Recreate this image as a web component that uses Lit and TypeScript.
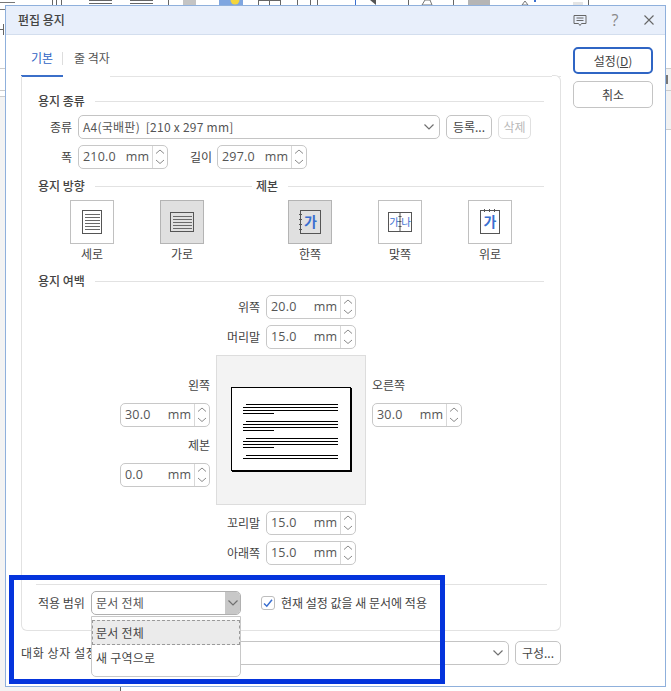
import { LitElement, html, css, svg } from "lit";
import { customElement } from "lit/decorators.js";

const chevUp = svg`<path d="M2 5.5 L6 2 L10 5.5" fill="none" stroke="#8a8a8a" stroke-width="1"/>`;
const chevDown = svg`<path d="M2 2 L6 5.5 L10 2" fill="none" stroke="#8a8a8a" stroke-width="1"/>`;

const spin = (val: string) => html`
  <div class="spin">
    <span class="val">${val}</span><span class="unit">mm</span>
    <span class="arrows">
      <svg width="12" height="8" viewBox="0 0 12 8">${chevUp}</svg>
      <svg width="12" height="8" viewBox="0 0 12 8">${chevDown}</svg>
    </span>
  </div>`;

const chevron = html`<svg class="chev" width="12" height="8" viewBox="0 0 12 8"><path d="M1.5 1.5 L6 6 L10.5 1.5" fill="none" stroke="#707070" stroke-width="1.2"/></svg>`;

const lines = (w: number, ys: number[]) =>
  ys.map((y) => svg`<path d="M4 ${y}.5 H${w - 3}" stroke="#6a6a6a" stroke-width="1"/>`);

const portraitIcon = svg`<svg width="22" height="26" viewBox="0 0 22 26">
  <rect x="1.5" y="1.5" width="19" height="23" fill="none" stroke="#555"/>
  ${lines(22, [5, 8, 11, 14, 17, 20])}</svg>`;
const landscapeIcon = svg`<svg width="26" height="22" viewBox="0 0 26 22">
  <rect x="1.5" y="1.5" width="23" height="19" fill="none" stroke="#555"/>
  ${lines(26, [5, 8, 11, 14, 17])}</svg>`;

@customElement("app-root")
export class AppRoot extends LitElement {
  static styles = css`
    :host {
      display: block;
      position: relative;
      width: 671px;
      height: 691px;
      overflow: hidden;
      background: #fff;
      font-family: "Noto Sans CJK KR", "Noto Sans", sans-serif;
      font-size: 12px;
      color: #444;
      line-height: 16px;
    }
    * { box-sizing: border-box; }
    .backdrop { position: absolute; inset: 0; }
    .dialog {
      position: absolute;
      left: 5px;
      top: 5px;
      width: 661px;
      height: 682px;
      background: #fff;
      border: 1px solid #8fb0dc;
      display: flex;
      flex-direction: column;
    }
    .titlebar {
      height: 29px;
      flex: none;
      background: #e8effb;
      border-bottom: 1px solid #d3deee;
      display: flex;
      align-items: center;
      padding-left: 12px;
      padding-right: 10px;
      font-weight: 500;
      color: #444;
    }
    .titlebar .t { flex: 1; }
    .ticons { display: flex; gap: 20px; align-items: center; }
    .help { width: 16px; text-align: center; font-family: "Open Sans", sans-serif; font-size: 16px; color: #888; }
    .body { position: relative; flex: 1; padding: 12px 0 0 15px; display: flex; gap: 12px; }
    .main { width: 540px; display: flex; flex-direction: column; }
    .tabs { display: flex; height: 30px; }
    .tab { width: 42px; height: 30px; text-align: center; padding-top: 3px; color: #2f65c4; border-bottom: 2px solid #3b6fc9; position: relative; }
    .tab.off { width: auto; margin-left: 11px; color: #555; border: 0; }
    .tab.on::after { content: ""; position: absolute; right: 0; top: 5px; width: 1px; height: 13px; background: #ddd; }
    .tabs .rest { flex: 1; height: 30px; border-bottom: 1px solid #e4e4e4; }
    .panel {
      height: 555px;
      margin-top: -1px;
      border: 1px solid #e2e2e2;
      border-top: 0;
      border-radius: 0 6px 6px 6px;
      padding: 17px 16px 0 14px;
      position: relative;
    }
    .panel::before { content: ""; position: absolute; right: -1px; top: -1px; width: 8px; height: 8px; border: 1px solid #e2e2e2; border-width: 1px 1px 0 0; border-radius: 0 6px 0 0; background: #fff; }
    .head { display: flex; align-items: center; height: 16px; gap: 10px; padding-left: 2px; color: #444; font-weight: 500; }
    .head i { flex: 1; height: 1px; background: #e2e2e2; display: block; }
    .row { display: flex; align-items: center; }
    .r1 { margin-top: 6px; height: 24px; }
    .r2 { margin-top: 6px; height: 24px; }
    .lab { width: 42px; text-align: right; padding-right: 6px; flex: none; }
    .select {
      height: 24px;
      border: 1px solid #c4c4c4;
      border-radius: 5px;
      display: flex;
      align-items: center;
      padding: 0 3px 0 4px;
      color: #555;
      background: #fff;
    }
    .select .tx { flex: 1; white-space: pre; letter-spacing: .25px; }
    .select .chev { margin-right: 1px; }
    .btn { height: 24px; border: 1px solid #c4c4c4; border-radius: 5px; text-align: center; line-height: 22px; background: #fff; color: #444; }
    .btn.dis { color: #b9b9b9; border-color: #e0e0e0; }
    .btn.reg { width: 46px; margin-left: 6px; }
    .btn.del { width: 33px; margin-left: 6px; }
    .len { margin-left: 22px; width: 27px; }
    .spin {
      width: 90px;
      height: 24px;
      flex: none;
      border: 1px solid #c8c8c8;
      border-radius: 5px;
      display: flex;
      align-items: center;
      padding-left: 4px;
      font-family: "Open Sans", "Noto Sans", sans-serif;
      font-size: 12.5px;
      color: #555;
      background: #fff;
    }
    .spin .val { flex: 1; letter-spacing: .2px; }
    .spin .unit { margin-right: 3px; }
    .arrows { width: 15px; height: 22px; border-left: 1px solid #d8d8d8; display: flex; flex-direction: column; align-items: center; justify-content: center; gap: 2px; }
    .arrows svg { display: block; }
    .r1 .select { width: 362px; }
    .orient { height: 76px; display: grid; grid-template-columns: 90px 128px 90px 90px 44px; padding-left: 34px; margin-top: 6px; }
    .opt { width: 44px; display: flex; flex-direction: column; align-items: center; }
    .box { width: 44px; height: 44px; border: 1px solid #c0c0c0; display: flex; align-items: center; justify-content: center; background: #fff; flex: none; }
    .box.sel { background: #e0e0e0; border-color: #b4b4b4; }
    .opt span { margin-top: 2px; white-space: nowrap; }
    .heads2 { display: flex; margin-top: 9px; height: 16px; }
    .heads2 .head:first-child { width: 216px; }
    .heads2 .head:last-child { flex: 1; padding-left: 3px; margin-left: 1px; }
    .head.mh { margin-top: -3px; }
    .margin { display: grid; grid-template-columns: 91px 6px 150px 6px 91px; grid-template-rows: 24px 24px 150px 24px 24px; row-gap: 6px; margin-left: 83px; margin-top: 6px; width: 344px; }
    .mrow { grid-column: 3; display: flex; justify-content: flex-end; align-items: center; gap: 6px; margin-left: -50px; padding-right: 10px; }
    .m1 { grid-row: 1; }
    .m2 { grid-row: 2; }
    .m4 { grid-row: 4; }
    .m5 { grid-row: 5; }
    .cell-c { grid-column: 3; grid-row: 3; background: #f3f3f3; border: 1px solid #ddd; display: flex; align-items: center; justify-content: center; padding-bottom: 2px; }
    .cell-l, .cell-r { grid-row: 3; display: flex; flex-direction: column; padding-top: 22px; }
    .cell-l { grid-column: 1; align-items: flex-end; }
    .cell-r { grid-column: 5; align-items: flex-start; }
    .sp { margin-top: 10px; }
    .gap { margin-top: 10px; }
    .page { width: 120px; height: 84px; border: 1px solid #000; box-shadow: 1px 1px 0 #000; background: #fff; display: block; }
    .page svg { display: block; }
    .apply { position: absolute; left: 14px; right: 13px; top: 508px; border-top: 1px solid #e2e2e2; height: 31px; display: flex; align-items: center; padding: 6px 0 0 2px; gap: 6px; }
    .apply .alab { width: 47px; white-space: nowrap; }
    .apply .select { width: 150px; padding-right: 0; overflow: hidden; border-color: #b0b0b0; }
    .apply .dd { width: 15px; height: 22px; background: #c8c8c8; display: flex; align-items: center; justify-content: center; }
    .apply .dd .chev { margin: 0; }
    .check { width: 14px; height: 14px; border: 1px solid #bdbdbd; border-radius: 3px; margin-left: 14px; display: flex; align-items: center; justify-content: center; }
    .bottom { margin-top: 10px; display: flex; align-items: center; height: 24px; width: 540px; gap: 6px; }
    .bottom .name { letter-spacing: .6px; white-space: nowrap; }
    .bottom .select { flex: 1; }
    .bottom .btn { width: 46px; }
    .side { width: 80px; display: flex; flex-direction: column; gap: 7px; }
    .side .btn { width: 80px; height: 27px; line-height: 25px; }
    .side .primary { border: 2px solid #2f65c4; line-height: 23px; }
    u { text-underline-offset: 1px; }
    .menu {
      position: absolute;
      left: 91px;
      top: 616px;
      width: 150px;
      height: 61px;
      background: #fff;
      border: 1px solid #c8c8c8;
      border-radius: 0 0 5px 5px;
      padding-top: 3px;
      z-index: 2;
    }
    .item { height: 25px; padding: 4px 4px; line-height: 17px; color: #444; letter-spacing: .25px; }
    .item.on { background: #ebebeb; border: 1px dashed #9a9a9a; padding: 3px 3px; }
    .mark {
      position: absolute;
      left: 9px;
      top: 575px;
      width: 436px;
      height: 109px;
      border: 5px solid #0434dc;
      z-index: 3;
      pointer-events: none;
    }
    .blue { fill: #3a6fd0; }
  `;

  render() {
    return html`
      <svg class="backdrop" width="671" height="691" viewBox="0 0 671 691">
        <rect x="0" y="96" width="5" height="595" fill="#f3f3f3"/>
        <rect x="666" y="68" width="5" height="62" fill="#f2f2f2"/>
        <rect x="0" y="687" width="120" height="4" fill="#f3f3f3"/>
        <rect x="183" y="0" width="13" height="5" fill="#c4c4c4"/>
        <rect x="219" y="0" width="24" height="5" fill="#7fa6e0"/>
        <circle cx="235" cy="0" r="4.5" fill="#f5d63d"/>
        <rect x="468" y="0" width="22" height="5" fill="#b5b5b5"/>
        <rect x="573" y="2" width="10" height="3" fill="#e4e4e4"/>
        <path d="M0 2.5H15 M0 9.5H5" stroke="#777" fill="none"/>
        <path d="M52.5 0V5 M56.5 0V5 M61.5 0V5 M89 .5H112 M89 3.5H112 M130 .5H153 M130 3.5H153 M168.5 0V5 M258 .5H280 M258.5 0V5 M269.5 0V5 M280.5 0V5 M297.5 0V5 M310.5 0V5 M317.5 0V5 M408.5 0V5 M453.5 0V5 M588.5 0V5 M3.5 24V35 M0 29.5H3 M120.5 687V691"
          stroke="#666" fill="none"/>
        <path d="M0 68.5H5 M0 90.5H5 M0 96.5H5 M666 68.5H671 M666 90.5H671 M666 129.5H671" stroke="#ccc" fill="none"/>
        <rect x="666" y="75" width="2" height="9" fill="#777"/>
        <path d="M355.5 0V5" stroke="#3a6fd0" fill="none"/>
        <path d="M370 0H376V5Z" fill="#555"/>
        <path d="M422 5L425 0H430L432 5Z M522 5L525 1L528 5Z" fill="none" stroke="#777"/>
        <rect x="534" y="0" width="2" height="2" fill="#3a6fd0"/>
      </svg>

      <div class="dialog">
        <div class="titlebar">
          <span class="t">편집 용지</span>
          <div class="ticons">
            <svg width="14" height="14" viewBox="0 0 14 14"><path d="M1 2.5H13V10.5H8.5L7 12.5L5.5 10.5H1Z M3.5 5H10.5 M3.5 7.5H10.5" fill="none" stroke="#666"/></svg>
            <span class="help">?</span>
            <svg width="12" height="12" viewBox="0 0 12 12"><path d="M1.5 1.5L10.5 10.5M10.5 1.5L1.5 10.5" fill="none" stroke="#666" stroke-width="1.1"/></svg>
          </div>
        </div>
        <div class="body">
          <div class="main">
            <div class="tabs">
              <div class="tab on">기본</div>
              <div class="tab off">줄 격자</div>
              <div class="rest"></div>
            </div>
            <div class="panel">
              <div class="head">용지 종류<i></i></div>
              <div class="row r1">
                <div class="lab">종류</div>
                <div class="select"><span class="tx">A4(국배판)  [210 x 297 mm]</span>${chevron}</div>
                <div class="btn reg">등록...</div>
                <div class="btn dis del">삭제</div>
              </div>
              <div class="row r2">
                <div class="lab">폭</div>
                ${spin("210.0")}
                <div class="len">길이</div>
                ${spin("297.0")}
              </div>
              <div class="heads2">
                <div class="head">용지 방향<i></i></div>
                <div class="head">제본<i></i></div>
              </div>
              <div class="orient">
                <div class="opt"><div class="box">${portraitIcon}</div><span>세로</span></div>
                <div class="opt"><div class="box sel">${landscapeIcon}</div><span>가로</span></div>
                <div class="opt"><div class="box sel"><svg width="22" height="26" viewBox="0 0 22 26"><rect x="1.5" y="1.5" width="20" height="23" fill="none" stroke="#555"/><path d="M0 5.5H3M0 10.5H3M0 15.5H3M0 20.5H3" stroke="#555"/><text class="blue" x="11.5" y="18" font-size="14" font-weight="700" text-anchor="middle">가</text></svg></div><span>한쪽</span></div>
                <div class="opt"><div class="box"><svg width="26" height="22" viewBox="0 0 26 22"><rect x="1.5" y="1.5" width="23" height="19" fill="none" stroke="#555"/><path d="M13 1V21M11.5 5.5H14.5M11.5 10.5H14.5M11.5 15.5H14.5" stroke="#555"/><text class="blue" x="7" y="15" font-size="10.5" text-anchor="middle">가</text><text class="blue" x="19" y="15" font-size="10.5" text-anchor="middle">나</text></svg></div><span>맞쪽</span></div>
                <div class="opt"><div class="box"><svg width="22" height="26" viewBox="0 0 22 26"><rect x="1.5" y="1.5" width="19" height="23" fill="none" stroke="#555"/><path d="M5.5 0V3M10.5 0V3M15.5 0V3" stroke="#555"/><text class="blue" x="11" y="18" font-size="14" font-weight="700" text-anchor="middle">가</text></svg></div><span>위로</span></div>
              </div>
              <div class="head mh">용지 여백<i></i></div>
              <div class="margin">
                <div class="mrow m1">위쪽 ${spin("20.0")}</div>
                <div class="mrow m2">머리말 ${spin("15.0")}</div>
                <div class="cell-l">
                  <div>왼쪽</div>
                  <div class="sp">${spin("30.0")}</div>
                  <div class="gap">제본</div>
                  <div class="sp">${spin("0.0")}</div>
                </div>
                <div class="cell-c">
                  <div class="page">
                    <svg width="118" height="82" viewBox="0 0 118 82">
                      <path d="M14 16.5H106 M11 19.5H106 M11 22.5H106 M11 25.5H42 M14 33.5H106 M11 36.5H106 M11 39.5H106 M11 42.5H42 M14 50.5H106 M11 53.5H106 M11 56.5H106 M11 59.5H42 M14 67.5H106 M11 70.5H106" stroke="#000" stroke-width="1"/>
                    </svg>
                  </div>
                </div>
                <div class="cell-r">
                  <div>오른쪽</div>
                  <div class="sp">${spin("30.0")}</div>
                </div>
                <div class="mrow m4">꼬리말 ${spin("15.0")}</div>
                <div class="mrow m5">아래쪽 ${spin("15.0")}</div>
              </div>
              <div class="apply">
                <span class="alab">적용 범위</span>
                <div class="select"><span class="tx">문서 전체</span><span class="dd">${chevron}</span></div>
                <div class="check"><svg width="12" height="12" viewBox="0 0 12 12"><path d="M2 6.5L4.8 9.2L10 2.8" fill="none" stroke="#3a6fd0" stroke-width="1.5"/></svg></div>
                <span>현재 설정 값을 새 문서에 적용</span>
              </div>
            </div>
            <div class="bottom">
              <span class="name">대화 상자 설정</span>
              <div class="select"><span class="tx"></span>${chevron}</div>
              <div class="btn">구성...</div>
            </div>
          </div>
          <div class="side">
            <div class="btn primary">설정(<u>D</u>)</div>
            <div class="btn">취소</div>
          </div>
        </div>
      </div>

      <div class="menu">
        <div class="item on">문서 전체</div>
        <div class="item">새 구역으로</div>
      </div>
      <div class="mark"></div>
    `;
  }
}
